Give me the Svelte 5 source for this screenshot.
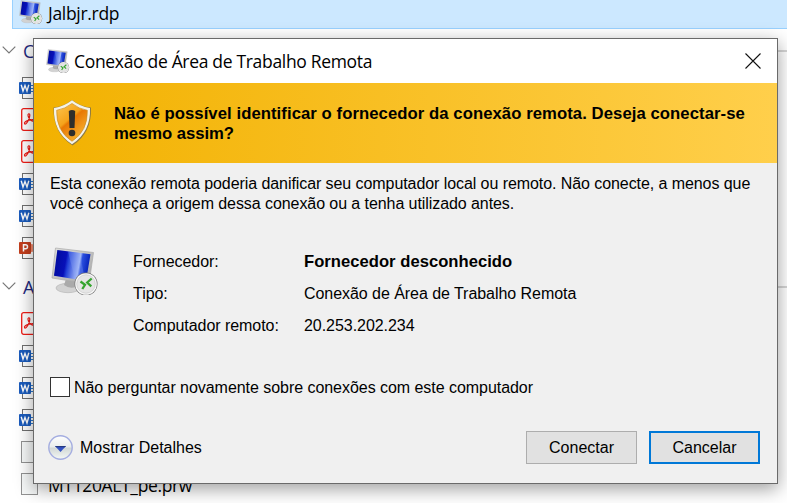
<script>
  const groups = [
    { label: 'C', cls: 'first', files: ['word', 'pdf', 'pdf', 'word', 'word', 'ppt'] },
    { label: 'A', cls: 'second', files: ['pdf', 'word', 'word', 'word', 'blank', 'blank'] }
  ];
</script>

{#snippet monitor(size, id)}
  <svg width={size} height={size} viewBox="0 0 48 48">
    <defs>
      <linearGradient id="scr{id}" x1="0" y1="0" x2="1" y2="0.15">
        <stop offset="0" stop-color="#000b9a" /><stop offset=".36" stop-color="#0710b8" />
        <stop offset=".44" stop-color="#2443d8" /><stop offset=".74" stop-color="#a9bdf8" />
        <stop offset=".8" stop-color="#2c50df" /><stop offset="1" stop-color="#0825bc" />
      </linearGradient>
      <linearGradient id="fr{id}" x1="0" y1="0" x2="1" y2="1">
        <stop offset="0" stop-color="#e0e0de" /><stop offset="1" stop-color="#a4a4a4" />
      </linearGradient>
    </defs>
    <ellipse cx="17" cy="41" rx="12" ry="4.7" fill="#d2d2d2" stroke="#b0b0b0" stroke-width=".6" />
    <path d="M15 32 L27 34 L25 40 Q18 42 13 38Z" fill="#aaa" />
    <path d="M4.500 1 L42.500 5.500 L38 37 L1 31Z" fill="url(#fr{id})" stroke="#aaa" stroke-width=".7" />
    <path d="M6.3 3 L39.5 7.300 L35 34 L3 28.8Z" fill="url(#scr{id})" />
    <path d="M17 4.500 L29 6 L34 33.8 L24 32.200Z" fill="#8ba7f5" opacity=".3" />
    <circle cx="35" cy="37" r="11.5" fill="#777" />
    <circle cx="35" cy="37" r="10.8" fill="#fafafa" />
    <circle cx="35" cy="37" r="9.3" fill="#e5e5e5" stroke="#bbb" stroke-width=".5" />
    <path d="M29.500 34.500 L34 37.800 L31.3 42 M40.700 31.500 L36.2 35.500 L40.3 39.300" fill="none" stroke="#35a52f" stroke-width="2.3" />
  </svg>
{/snippet}

{#snippet fileIcon(kind)}
  <svg class={kind === 'pdf' ? 'pdf' : 'file'} width="24" height="26" viewBox="0 0 24 26">
    {#if kind === 'pdf'}
      <rect x="2.7" y="2.700" width="18" height="21.6" rx="2" fill="#fff" stroke="#ef1c16" stroke-width="1.3" />
      <g fill="none" stroke="#ef1c16" stroke-width="1.2">
        <path d="M5.600 17.800C4.700 16.600 7 14.800 10 14.200C13 13.500 16 13.500 16.300 14.700C16.500 16 13 15.600 11 13.400C9 11.200 8.300 8.300 9.700 7.800C11.300 7.400 11 10.500 9.700 13.500C8.500 16.400 6.500 18.900 5.600 17.800Z" />
      </g>
    {:else if kind === 'blank'}
      <rect x="2.500" y="1.500" width="16" height="21" fill="#f6f8f8" stroke="#929292" />
    {:else}
      <rect x="3.500" y="1.500" width="16" height="21" fill="#fff" stroke="#707070" />
      {#if kind === 'word'}
        <path d="M12 9.500H17M12 12.500H17M12 15.500H17" stroke="#2d79cc" />
      {:else}
        <circle cx="12" cy="12" r="4" fill="#f28c70" />
      {/if}
      <rect x="0" y="6" width="12" height="12" rx="1" fill={kind === 'word' ? '#1b5cbe' : '#c43e1c'} />
      {#if kind === 'word'}
        <path d="M2.200 8.800L4 15L6 9.500L8 15L9.800 8.800" fill="none" stroke="#fff" stroke-width="1.400" />
      {:else}
        <path d="M4.500 15.500V8.800H6.500Q8.500 8.800 8.500 10.800T6.500 12.700H4.500" fill="none" stroke="#fff" stroke-width="1.500" />
      {/if}
    {/if}
  </svg>
{/snippet}

<div class="screen">
  <div class="selected">{@render monitor(24, 'a')}<span>Jalbjr.rdp</span></div>
  {#each groups as group, g}
    <div class="heading {group.cls}">
      <svg width="14" height="8" viewBox="0 0 14 8"><path d="M.7.7L7 7L13.300.7" fill="none" stroke="#777" stroke-width="1.200" /></svg>
      <span>{group.label}</span><i></i>
    </div>
    {#each group.files as kind, n}
      <div class="row">{@render fileIcon(kind)}{#if g === 1 && n === 5}<span>MT120ALT_pe.prw</span>{/if}</div>
    {/each}
  {/each}

  <section class="dialog">
    <header>
      {@render monitor(24, 'b')}
      <span class="title">Conexão de Área de Trabalho Remota</span>
      <svg class="close" width="16" height="16" viewBox="0 0 16 16"><path d="M.5.5L15.500 15.500M15.500.5L.5 15.500" stroke="#111" stroke-width="1.100" /></svg>
    </header>
    <div class="banner">
      <svg width="40" height="48" viewBox="0 0 40 48">
        <defs>
          <linearGradient id="shield" x1="0" y1="0" x2=".7" y2="1">
            <stop offset="0" stop-color="#fcc650" /><stop offset=".46" stop-color="#f5a31b" />
            <stop offset=".52" stop-color="#e87804" /><stop offset="1" stop-color="#fbb733" />
          </linearGradient>
        </defs>
        <path d="M20 1Q28 7.500 39 8.500Q40 34 20.500 46.500Q1 34 1.500 8.500Q12 7.500 20 1Z" fill="#8c7a46" />
        <path d="M20 1.300Q28 7.500 38 9Q39 33 20 45.300Q1 33 2 9Q12 7.500 20 1.300Z" fill="#f5f3e9" />
        <path d="M20 4.500Q27 10 35.300 11.300Q36 32 20 42.300Q4 32 4.700 11.300Q13 10 20 4.500Z" fill="url(#shield)" stroke="#cb8d22" stroke-width=".7" />
        <path d="M16.800 12Q20 10 23.200 12L22.500 29H17.500Z" fill="#302e2b" />
        <circle cx="20" cy="34" r="3.300" fill="#302e2b" />
      </svg>
      <p><span class="b1">Não é possível identificar o fornecedor da conexão remota. Deseja conectar-se</span><br /><span class="b2">mesmo assim?</span></p>
    </div>
    <p class="warning">Esta conexão remota poderia danificar seu computador local ou remoto. Não conecte, a menos que<br />você conheça a origem dessa conexão ou a tenha utilizado antes.</p>
    <div class="details">
      {@render monitor(48, 'c')}
      <dl>
        <dt>Fornecedor:</dt><dd><b>Fornecedor desconhecido</b></dd>
        <dt>Tipo:</dt><dd>Conexão de Área de Trabalho Remota</dd>
        <dt>Computador remoto:</dt><dd>20.253.202.234</dd>
      </dl>
    </div>
    <div class="check"><i></i><span>Não perguntar novamente sobre conexões com este computador</span></div>
    <footer>
      <svg width="26" height="26" viewBox="0 0 26 26">
        <defs><linearGradient id="round" x1="0" y1="0" x2="0" y2="1"><stop offset="0" stop-color="#fff" /><stop offset=".48" stop-color="#e9edec" /><stop offset=".52" stop-color="#d2d8d6" /><stop offset="1" stop-color="#f4f8f5" /></linearGradient></defs>
        <circle cx="12.500" cy="12.500" r="11.700" fill="url(#round)" stroke="#a4ade0" stroke-width="1.400" />
        <path d="M7 11H18L12.500 17Z" fill="#3454c4" /><path d="M7 11H18L17 12.300H8Z" fill="#253a80" />
      </svg>
      <span>Mostrar Detalhes</span>
      <button>Conectar</button><button class="primary">Cancelar</button>
    </footer>
  </section>
</div>

<style>
  :global(body) { margin: 0; background: #fff; }
  .screen { position: relative; width: 787px; height: 503px; overflow: hidden; background: #fff; font: 16px/20px "Liberation Sans", Arial, sans-serif; color: #000; }
  svg { display: block; flex: none; }
  .selected { box-sizing: border-box; height: 29px; margin-left: 12px; padding: 0 0 0 6px; display: flex; background: #cce8ff; border: solid #99d1ff; border-width: 0 0 1px 1px; font: 17.5px/27px "Open Sans", "Noto Sans", sans-serif; }
  .selected span { margin-left: 5px; letter-spacing: -.3px; }
  .heading { display: flex; align-items: center; padding-left: 2px; color: #1e287d; font: 18px/24px "Open Sans", "Noto Sans", sans-serif; }
  .heading span { margin-left: 7px; width: 30px; }
  .heading i { flex: 1; height: 2px; background: #d5d5d5; }
  .heading svg { margin-top: -2px; }
  .first { height: 44px; }
  .second { height: 44px; }
  .row { height: 32px; padding-left: 19px; display: flex; align-items: center; }
  .pdf { margin-top: -4px; }
  .row span { margin-left: 5px; font: 17.5px/24px "Open Sans", "Noto Sans", sans-serif; letter-spacing: -.36px; }
  .dialog { position: absolute; left: 33px; top: 38px; width: 743px; height: 444px; border: 1px solid #6a6a6a; background: #f0f0f0; box-shadow: 0 5px 17px rgba(0,0,0,.38); }
  header { height: 44px; background: #fff; display: flex; align-items: center; padding: 0 16px 0 12px; }
  .close { margin-top: -1px; }
  .title { flex: 1; margin-left: 4px; font: 17.5px/24px "Open Sans", "Noto Sans", sans-serif; letter-spacing: -.32px; white-space: nowrap; }
  .banner { height: 80px; background: linear-gradient(90deg, #f2b100, #ffcf4b); display: flex; align-items: flex-start; box-sizing: border-box; padding: 16px 0 0 18px; }
  p { margin: 0; white-space: nowrap; }
  .banner p { margin: 5px 0 0 22px; font-weight: bold; font-size: 16.7px; }
  .b1 { letter-spacing: .063px; }
  .b2 { letter-spacing: -.05px; }
  .warning { margin: 11px 0 0 16px; letter-spacing: -.073px; }
  .details { display: flex; padding: 33px 0 0 17px; height: 120px; box-sizing: border-box; }
  dl { margin: 0 0 0 34px; display: grid; grid-template-columns: 171px 300px; grid-auto-rows: 32px; height: 96px; line-height: 30px; white-space: nowrap; letter-spacing: -.05px; }
  dd { margin: 0; }
  dd b { font-size: 16.6px; letter-spacing: .03px; }
  .check { display: flex; align-items: center; margin: 42px 0 0 16px; height: 22px; }
  .check i { box-sizing: border-box; width: 20px; height: 20px; border: 1px solid #333; background: #fff; }
  .check span { margin: 1px 0 0 4px; white-space: nowrap; letter-spacing: -.045px; }
  footer { display: flex; align-items: center; margin: 33px 17px 0 14px; height: 33px; }
  footer span { flex: 1; margin-left: 6px; }
  button { box-sizing: border-box; width: 111px; height: 33px; margin: 0; padding: 0; border: 1px solid #adadad; background: #e1e1e1; font: 16px/20px "Liberation Sans", Arial, sans-serif; color: #000; }
  .primary { margin-left: 12px; border: 2px solid #0078d7; }
</style>
